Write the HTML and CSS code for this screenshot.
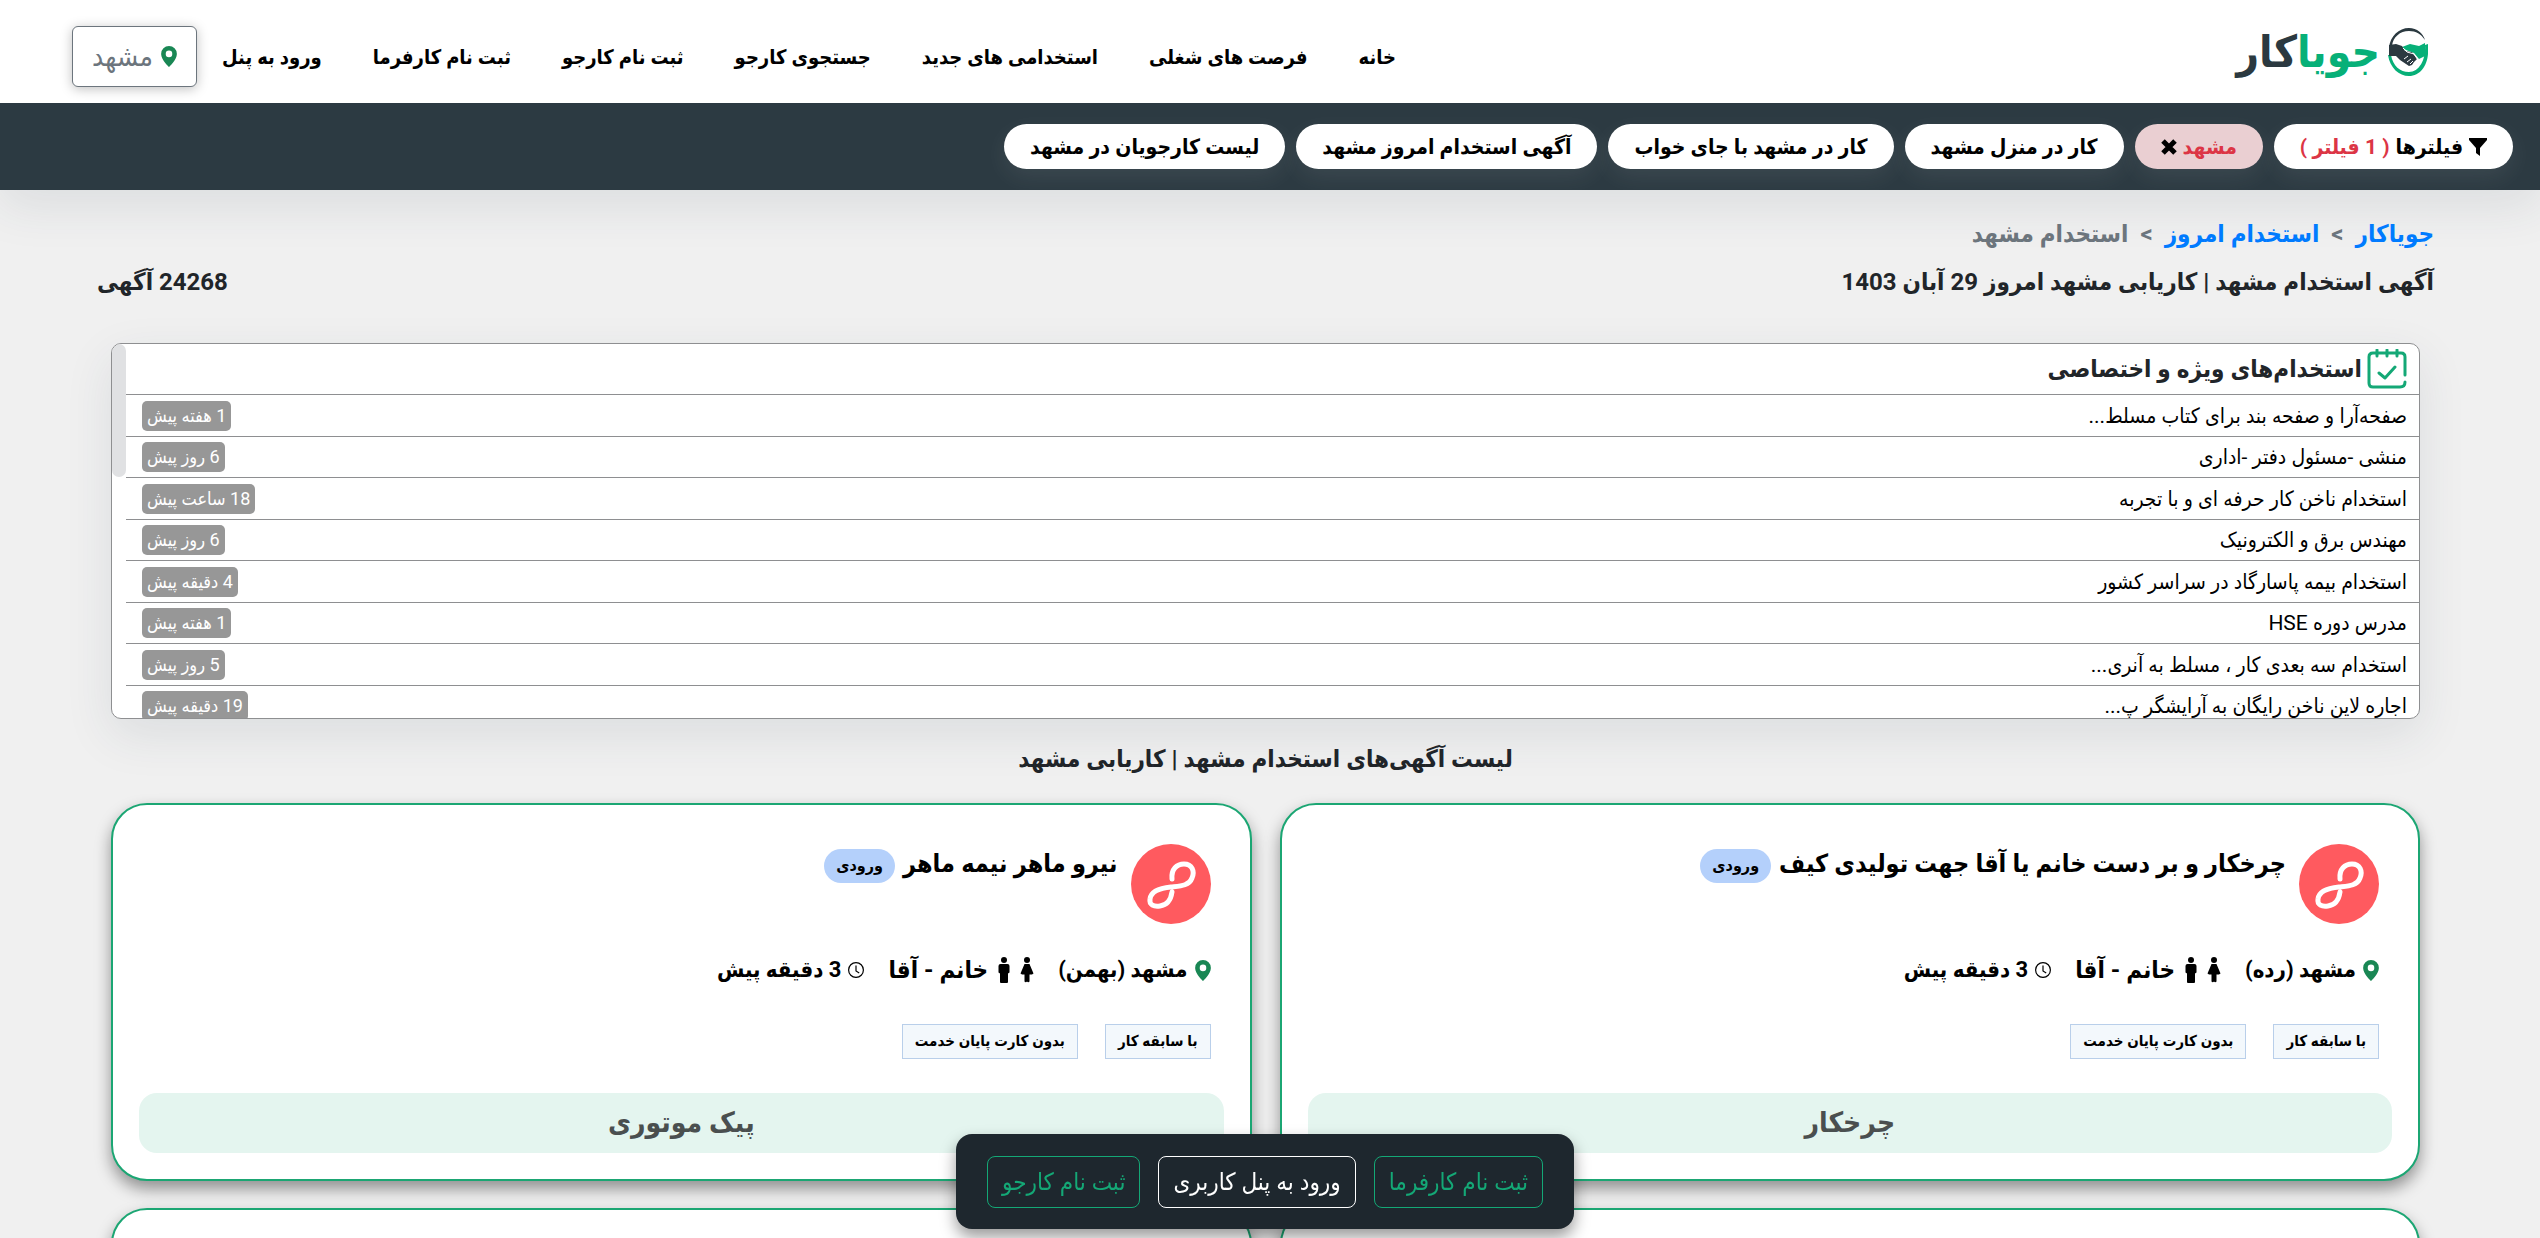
FILE: index.html
```html
<!DOCTYPE html>
<html lang="fa" dir="rtl">
<head>
<meta charset="utf-8">
<title>استخدام مشهد</title>
<link rel="stylesheet" href="styles.css">
</head>
<body>
<svg class="defs" aria-hidden="true">
  <symbol id="pin" viewBox="0 0 12 16"><path d="M6 16C6 16 12 10.300 12 6A6 6 0 0 0 0 6C0 10.300 6 16 6 16ZM6 8.500A2.500 2.500 0 1 1 6 3.500A2.500 2.500 0 0 1 6 8.500Z"/></symbol>
  <symbol id="woman" viewBox="0 0 14 26"><circle cx="7" cy="3" r="3"/><path d="M4.500 7H9.500L13.500 16.500L12 17.500H9.500V24.500A1.500 1.500 0 0 1 7 24.500A1.500 1.500 0 0 1 4.500 24.500V17.500H2L.5 16.500Z"/></symbol>
  <symbol id="man" viewBox="0 0 14 26"><circle cx="7" cy="3" r="3"/><path d="M3.500 7H10.500A2 2 0 0 1 12.500 9V15.500L11 16.500V25A1 1 0 0 1 10 26H4A1 1 0 0 1 3 25V16.500L1.500 15.500V9A2 2 0 0 1 3.500 7Z"/></symbol>
  <symbol id="clock" viewBox="0 0 16 16"><path fill="none" stroke="currentColor" d="M8 3.500V9L11.200 11M15.400 8A7.400 7.400 0 1 1 .6 8A7.400 7.400 0 0 1 15.400 8Z" stroke-width="1.200"/></symbol>
  <symbol id="loop" viewBox="0 0 80 80"><path fill="none" stroke="#fff" stroke-width="5" stroke-linecap="round" d="M41 35C40 25 46 20 53 20C61 20 64 27 61 34C58 42 49 42 40 43C29 44 20 47 19 55C18 61 23 63 29 62C37 61 40 55 41 48"/></symbol>
</svg>

<header class="top">
  <a class="logo" href="#">
    <svg class="logo-mark" viewBox="0 0 40 48" aria-hidden="true">
      <path fill="#2b3940" d="M1 20C2 8 11 0 21 0C29 0 35 5 37 12C33 6 28 3 21 3C12 3 5 9 4 18Z"/>
      <path fill="#07b078" d="M0 27C2 40 11 48 21 48C32 48 39 38 40 26V16L37 17C38 32 31 44 21 44C12 44 5 38 3 27Z"/>
      <path fill="#07b078" d="M14 19L22 16L31 18L37 15V28L31 31L26 25L18 22Z"/>
      <path fill="#2b3940" d="M1 17L8 16L14 18L17 23L24 24L29 31L26 34L24 37L21 38L12 32L8 28L1 28Z"/>
      <path fill="none" stroke="#fff" d="M19 34L23 31M16 31L20 28M22 36L25 33M15 20L19 24L26 26L30 32"/>
    </svg>
    <span class="logo-text"><b class="logo-green">جویا</b><b>کار</b></span>
  </a>
  <nav class="nav">
    <a href="#">خانه</a><a href="#">فرصت های شغلی</a><a href="#">استخدامی های جدید</a><a href="#">جستجوی کارجو</a><a href="#">ثبت نام کارجو</a><a href="#">ثبت نام کارفرما</a><a href="#">ورود به پنل</a>
    <button class="city" type="button"><svg class="pin"><use href="#pin"/></svg>مشهد</button>
  </nav>
</header>

<div class="filters">
  <button class="pill" type="button"><svg class="funnel" viewBox="0 0 18 18"><path d="M0 0H18V2L11 10V18L7 15V10L0 2Z"/></svg>فیلترها <span class="red">( 1 فیلتر )</span></button>
  <button class="pill active" type="button"><span class="red">مشهد</span> <svg class="cross" viewBox="0 0 16 16"><path d="M2 2L14 14M14 2L2 14" stroke="#000" stroke-width="5"/></svg></button>
  <a class="pill" href="#">کار در منزل مشهد</a>
  <a class="pill" href="#">کار در مشهد با جای خواب</a>
  <a class="pill" href="#">آگهی استخدام امروز مشهد</a>
  <a class="pill" href="#">لیست کارجویان در مشهد</a>
</div>

<main class="page">
  <nav class="crumbs"><a href="#">جویاکار</a><span>&gt;</span><a href="#">استخدام امروز</a><span>&gt;</span><span>استخدام مشهد</span></nav>
  <div class="headline"><h1>آگهی استخدام مشهد | کاریابی مشهد امروز 29 آبان 1403</h1><strong>24268 آگهی</strong></div>

  <section class="special">
    <i class="thumb"></i>
    <h2><svg class="cal" viewBox="0 0 40 40"><path fill="none" stroke="#14a876" stroke-width="3" stroke-linecap="round" stroke-linejoin="round" d="M38 26V8Q38 4 34 4H6Q2 4 2 8V34Q2 38 6 38H33Q38 38 38 33M10 1V7M20 1V7M30 1V7M12 24L18 29L28 18"/></svg>استخدام‌های ویژه و اختصاصی</h2>
    <ul>
      <li><a href="#">صفحه‌آرا و صفحه بند برای کتاب مسلط...</a><time>1 هفته پیش</time></li>
      <li><a href="#">منشی -مسئول دفتر -اداری</a><time>6 روز پیش</time></li>
      <li><a href="#">استخدام ناخن کار حرفه ای و با تجربه</a><time>18 ساعت پیش</time></li>
      <li><a href="#">مهندس برق و الکترونیک</a><time>6 روز پیش</time></li>
      <li><a href="#">استخدام بیمه پاسارگاد در سراسر کشور</a><time>4 دقیقه پیش</time></li>
      <li><a href="#">مدرس دوره HSE</a><time>1 هفته پیش</time></li>
      <li><a href="#">استخدام سه بعدی کار ، مسلط به آنری...</a><time>5 روز پیش</time></li>
      <li><a href="#">اجاره لاین ناخن رایگان به آرایشگر پ...</a><time>19 دقیقه پیش</time></li>
    </ul>
  </section>

  <h2 class="list-title">لیست آگهی‌های استخدام مشهد | کاریابی مشهد</h2>

  <section class="cards">
    <article class="card">
      <div class="card-head"><svg class="avatar"><use href="#loop"/></svg><h3>چرخکار و بر دست خانم یا آقا جهت تولیدی کیف</h3><span class="badge">ورودی</span></div>
      <div class="meta"><span><svg class="pin"><use href="#pin"/></svg>مشهد (رده)</span><span class="who"><svg class="person"><use href="#woman"/></svg><svg class="person"><use href="#man"/></svg>خانم - آقا</span><span><svg class="clock"><use href="#clock"/></svg>3 دقیقه پیش</span></div>
      <div class="tags"><span>با سابقه کار</span><span>بدون کارت پایان خدمت</span></div>
      <a class="category" href="#">چرخکار</a>
    </article>
    <article class="card">
      <div class="card-head"><svg class="avatar"><use href="#loop"/></svg><h3>نیرو ماهر نیمه ماهر</h3><span class="badge">ورودی</span></div>
      <div class="meta"><span><svg class="pin"><use href="#pin"/></svg>مشهد (بهمن)</span><span class="who"><svg class="person"><use href="#woman"/></svg><svg class="person"><use href="#man"/></svg>خانم - آقا</span><span><svg class="clock"><use href="#clock"/></svg>3 دقیقه پیش</span></div>
      <div class="tags"><span>با سابقه کار</span><span>بدون کارت پایان خدمت</span></div>
      <a class="category" href="#">پیک موتوری</a>
    </article>
    <article class="card"></article>
    <article class="card"></article>
  </section>
</main>

<div class="dock">
  <a href="#">ثبت نام کارفرما</a><a class="light" href="#">ورود به پنل کاربری</a><a href="#">ثبت نام کارجو</a>
</div>
</body>
</html>
```
FILE: styles.css
```css
* { box-sizing: border-box; }
body {
  margin: 0;
  background: #f0f0f0;
  color: #212529;
  font: 20px/30px Roboto, "DejaVu Sans Condensed", "DejaVu Sans", sans-serif;
  overflow-x: hidden;
}
a { color: inherit; text-decoration: none; }
button { font: inherit; cursor: pointer; }
h1, h2, h3, ul { margin: 0; padding: 0; }
.defs { display: none; }

.top {
  position: relative;
  z-index: 1;
  display: flex;
  justify-content: space-between;
  align-items: center;
  height: 103px;
  padding: 0 112px 0 72px;
  background: #fff;
}
.logo { display: flex; align-items: center; gap: 8px; color: #2b3940; }
.logo-mark { width: 40px; height: 48px; }
.logo-text { font-size: 44px; line-height: 48px; }
.logo-green { color: #07b078; }
.nav {
  display: flex;
  align-items: center;
  gap: 51px;
  padding-top: 10px;
  color: #000;
  font-size: 20px;
  font-weight: bold;
}
.city {
  display: flex;
  align-items: center;
  justify-content: center;
  gap: 8px;
  width: 125px;
  height: 61px;
  margin-right: -26px;
  border: 1px solid #6c757d;
  border-radius: 6px;
  background: #fff;
  box-shadow: 0 2px 12px rgba(0, 0, 0, .25);
  color: #6c757d;
  font-size: 28px;
  font-weight: normal;
}
.pin { width: 16px; height: 21px; fill: #198754; }

.filters {
  display: flex;
  align-items: center;
  gap: 11px;
  height: 87px;
  padding: 0 27px;
  background: #2c3a42;
  box-shadow: 0 16px 48px rgba(44, 62, 80, .1);
}
.pill {
  display: flex;
  align-items: center;
  gap: 6px;
  height: 45px;
  padding: 0 26px;
  border: 0;
  border-radius: 23px;
  background: #fff;
  box-shadow: 0 8px 24px rgba(255, 255, 255, .08);
  color: #000;
  font-size: 21px;
  font-weight: bold;
  white-space: nowrap;
}
.pill.active { background: #eacfd2; }
.red { color: #dc3545; }
.funnel { width: 18px; height: 18px; }
.cross { width: 16px; height: 16px; }

.page { padding: 26px 106px 0 97px; }
.crumbs {
  display: flex;
  gap: 12px;
  color: #6c757d;
  font-size: 24px;
  font-weight: bold;
  line-height: 36px;
}
.crumbs a { color: #007bff; }
.headline {
  display: flex;
  justify-content: space-between;
  margin-top: 10px;
  font-size: 24px;
  line-height: 40px;
}
h1, .list-title { font-size: 24px; line-height: 40px; }

.special {
  position: relative;
  height: 376px;
  margin: 41px 14px 0;
  padding-left: 14px;
  border: 1px solid #8e8f91;
  border-radius: 10px;
  background: #fff;
  box-shadow: 0 16px 48px rgba(44, 62, 80, .1);
  overflow: hidden;
}
.thumb {
  position: absolute;
  left: 0;
  top: 0;
  width: 14px;
  height: 133px;
  border-radius: 7px;
  background: #e0e1e3;
}
.special h2 {
  display: flex;
  align-items: center;
  gap: 5px;
  height: 51px;
  padding-right: 12px;
  border-bottom: 1px solid #8e8f91;
  font-size: 24px;
}
.cal { width: 40px; height: 40px; }
.special ul {
  display: grid;
  grid-template-rows: repeat(4, 42px 41px);
  list-style: none;
  color: #000;
  font-size: 21px;
}
.special li {
  display: flex;
  align-items: center;
  justify-content: space-between;
  padding: 0 12px 0 16px;
  border-bottom: 1px solid #8e8f91;
}
time {
  padding: 0 5px;
  border-radius: 5px;
  background: #979797;
  color: #fff;
  font-size: 18px;
}

.list-title { margin-top: 20px; text-align: center; }
.cards {
  display: grid;
  grid-template-columns: 1fr 1fr;
  gap: 27px 28px;
  padding: 24px 14px 0;
}
.card {
  min-height: 378px;
  padding: 39px 26px 0;
  border: 2px solid #1ba673;
  border-radius: 36px;
  background: #fff;
  box-shadow: 0 8px 16px rgba(0, 0, 0, .4);
  color: #000;
}
.card-head { display: flex; gap: 8px; padding: 0 13px; }
.avatar {
  width: 80px;
  height: 80px;
  margin-left: 5px;
  border-radius: 50%;
  background: #ff5a5f;
}
h3 { font-size: 25px; line-height: 40px; }
.badge {
  height: 34px;
  margin-top: 5px;
  padding: 0 12px;
  border-radius: 17px;
  background: #b4d0fb;
  font-size: 16px;
  font-weight: bold;
  line-height: 34px;
}
.meta {
  display: flex;
  gap: 24px;
  margin-top: 28px;
  padding: 0 13px;
  font-size: 22px;
  font-weight: bold;
  line-height: 36px;
}
.meta span { display: flex; align-items: center; gap: 7px; }
.meta .who { font-size: 24px; }
.person { width: 14px; height: 26px; margin-left: 2px; }
.clock { width: 16px; height: 16px; }
.tags { display: flex; gap: 27px; margin-top: 36px; padding: 0 13px; }
.tags span {
  height: 35px;
  padding: 0 12px;
  border: 1px solid #b9cfea;
  background: #f3f8fc;
  font-size: 15px;
  font-weight: bold;
  line-height: 33px;
}
.category {
  display: block;
  margin-top: 34px;
  border-radius: 18px;
  background: #e4f5ef;
  color: #4a4f4f;
  font-size: 28px;
  font-weight: bold;
  line-height: 60px;
  text-align: center;
}

.dock {
  position: fixed;
  right: 10px;
  bottom: 9px;
  left: 0;
  display: flex;
  align-items: center;
  gap: 18px;
  width: fit-content;
  height: 95px;
  margin: 0 auto;
  padding: 0 31px;
  border-radius: 16px;
  background: #1e272e;
  box-shadow: 0 8px 16px rgba(0, 0, 0, .4);
  color: #14a876;
  font-size: 24px;
}
.dock a {
  padding: 0 14px;
  border: 1px solid;
  border-radius: 8px;
  line-height: 50px;
}
.dock .light { color: #fff; }
```
